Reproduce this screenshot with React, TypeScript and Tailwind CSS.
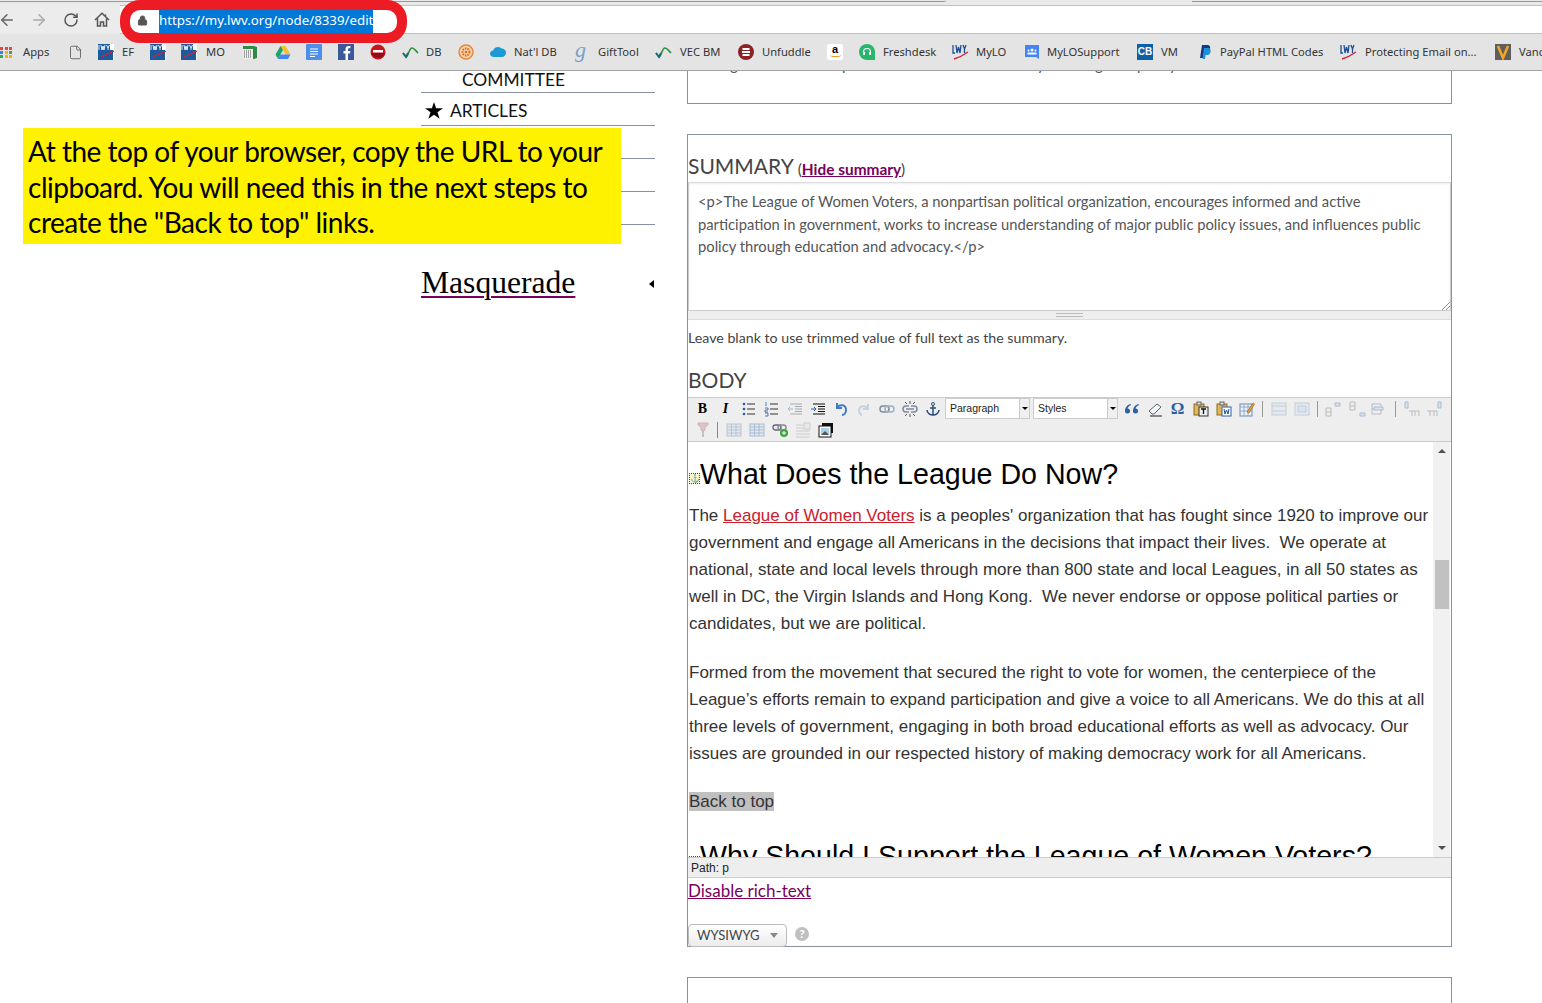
import React from "react";
import { ArrowLeft, ArrowRight, RotateCw, Lock, File } from "lucide-react";

const Lwv = () => (
  <svg width="16" height="16" viewBox="0 0 16 16">
    <rect width="16" height="16" fill="#fff" />
    <rect y="6" width="15" height="10" fill="#1c5a9c" />
    <rect x="0" y="0" width="12" height="7" fill="#1c5a9c" />
    <path d="M1 1v5M3 1l1 5 1-4 1 4 1-5M8.500 1l1.500 3 1.500-3M10 4v2" stroke="#fff" strokeWidth="0.900" fill="none" />
    <path d="M3 13 L16 7" stroke="#d8203c" strokeWidth="1.200" />
  </svg>
);
const LwvPlain = () => (
  <svg width="17" height="17" viewBox="0 0 17 17">
    <path d="M1 1v8h2M4 1l1 8 1.500-6 1.500 6 1-8M11 1l1.500 4 1.500-4M12.500 5v4" stroke="#1c4f94" strokeWidth="1.300" fill="none" />
    <path d="M2 15 Q9 13 16 8" stroke="#d8203c" strokeWidth="1.400" fill="none" />
  </svg>
);
const Apps = () => (
  <div className="grid grid-cols-3 gap-[1px] w-[13px]">
    {["#e8453c", "#e8453c", "#e8453c", "#3b7de0", "#f3b400", "#34a853", "#34a853", "#f3b400", "#f3b400"].map((c, i) => (
      <span key={i} className="w-[3px] h-[3px]" style={{ background: c }} />
    ))}
  </div>
);
const Wave = ({ c = "#1a6a7a" }: { c?: string }) => (
  <svg width="17" height="16" viewBox="0 0 17 16">
    <path d="M1 9 L4 13 C6 13 7 4 10 4 C12 4 14 7 16 9" stroke="#2d8f3e" strokeWidth="1.600" fill="none" />
    <path d="M1 9 L4 13 L6 9" stroke={c} strokeWidth="1.800" fill="none" />
  </svg>
);
const Box = ({ bg, children, r = 0 }: { bg: string; children?: React.ReactNode; r?: number }) => (
  <svg width="16" height="16" viewBox="0 0 16 16">
    <rect width="16" height="16" rx={r} fill={bg} />
    {children}
  </svg>
);

const bookmarks: { w: number; g?: number; icon?: React.ReactNode; label?: string }[] = [
  { w: 68, g: 23, icon: <Apps />, label: "Apps" },
  { w: 30, icon: <File size={15} strokeWidth={1.300} color="#555" /> },
  { w: 52, icon: <Lwv />, label: "EF" },
  { w: 31, icon: <Lwv /> },
  { w: 61, g: 25, icon: <Lwv />, label: "MO" },
  {
    w: 33,
    icon: (
      <svg width="16" height="16" viewBox="0 0 16 16">
        <path d="M1 2h11l3 1v11l-3 1H1z" fill="#2e8b46" />
        <rect x="1" y="5" width="10" height="10" fill="#eee" />
        <path d="M2 7h8M2 9h8M2 11h8M2 13h8" stroke="#555" strokeDasharray="1 1" />
      </svg>
    ),
  },
  {
    w: 31,
    icon: (
      <svg width="16" height="15" viewBox="0 0 16 15">
        <path d="M5.500 1h5l5 8.500h-5z" fill="#f6c02c" />
        <path d="M5.500 1 0.500 9.500 3 14 8 5z" fill="#1fa463" />
        <path d="M3 14h10l2.500-4.500h-10z" fill="#4285f4" />
      </svg>
    ),
  },
  {
    w: 32,
    icon: (
      <Box bg="#4d8ee8" r={1}>
        <path d="M4 5h8M4 7.500h8M4 10h8M4 12.500h5" stroke="#fff" />
      </Box>
    ),
  },
  {
    w: 32,
    icon: (
      <Box bg="#3b5998">
        <path d="M10 16V9.500h2l.300-2.500H10V5.500c0-.7.300-1.200 1.200-1.200h1.200V2c-.5 0-1-.1-1.700-.1C8.800 1.900 7.500 3 7.500 5.200V7H5.500v2.500h2V16z" fill="#fff" />
      </Box>
    ),
  },
  {
    w: 32,
    icon: (
      <svg width="16" height="16" viewBox="0 0 16 16">
        <circle cx="8" cy="8" r="7.500" fill="#c8141c" />
        <path d="M1 9a7.500 7.500 0 0 0 14 0z" fill="#8e0e14" />
        <rect x="3" y="6" width="10" height="2.500" fill="#fff" />
      </svg>
    ),
  },
  { w: 56, icon: <Wave />, label: "DB" },
  {
    w: 32,
    icon: (
      <svg width="16" height="16" viewBox="0 0 16 16">
        <circle cx="8" cy="8" r="7" fill="#f6d2a8" stroke="#e0863a" strokeWidth="1.400" />
        <circle cx="8" cy="8" r="3.500" fill="none" stroke="#d9682a" strokeWidth="2" strokeDasharray="1.500 1" />
        <circle cx="8" cy="8" r="1.200" fill="#d9682a" />
      </svg>
    ),
  },
  {
    w: 84,
    icon: (
      <svg width="16" height="12" viewBox="0 0 16 12">
        <path d="M4 11C1 11 0 9 0 7.500 0 5.500 2 4.500 3 4.500 4 2 6 1 8 1c1.500 0 3 1 3.500 1.500C13.500 2.500 16 4 16 6.500S14 11 12 11z" fill="#1b9ad6" />
      </svg>
    ),
    label: "Nat'l DB",
  },
  {
    w: 81,
    icon: <span className="text-[22px] leading-none italic text-[#7d9fc9] font-['Liberation_Serif',serif] -mt-1 ml-[1px]">g</span>,
    label: "GiftTool",
  },
  { w: 83, g: 25, icon: <Wave />, label: "VEC BM" },
  {
    w: 89,
    icon: (
      <svg width="16" height="16" viewBox="0 0 16 16">
        <circle cx="8" cy="8" r="8" fill="#8a2326" />
        <path d="M4.500 5h7M4 8h8M4.500 11h7" stroke="#fff" strokeWidth="1.800" />
      </svg>
    ),
    label: "Unfuddle",
  },
  {
    w: 32,
    icon: (
      <div className="w-4 h-4 bg-white rounded-[2px] flex flex-col items-center justify-start">
        <span className="text-[11px] leading-[10px] font-bold text-black font-['Liberation_Sans',sans-serif]">a</span>
        <span className="w-[11px] h-[3px] border-b-[1.5px] border-[#f29a1f] rounded-b-full" />
      </div>
    ),
  },
  {
    w: 93,
    icon: (
      <svg width="16" height="16" viewBox="0 0 16 16">
        <path d="M8 0a8 8 0 0 1 8 8v8H8A8 8 0 0 1 8 0z" fill="#27b76b" />
        <path d="M4.500 9V8a3.500 3.500 0 0 1 7 0v1" stroke="#fff" fill="none" strokeWidth="1.200" />
        <rect x="4" y="8" width="2" height="3" fill="#fff" />
        <rect x="10" y="8" width="2" height="3" fill="#fff" />
      </svg>
    ),
    label: "Freshdesk",
  },
  { w: 72, icon: <LwvPlain />, label: "MyLO" },
  {
    w: 113,
    g: 23,
    icon: (
      <svg width="16" height="16" viewBox="0 0 16 16">
        <path d="M1 1h14v14l-3-2H1z" fill="#4285f4" />
        <circle cx="8" cy="6" r="1.500" fill="#fff" />
        <circle cx="4.500" cy="6.500" r="1" fill="#fff" />
        <circle cx="11.500" cy="6.500" r="1" fill="#fff" />
        <rect x="3.500" y="8.500" width="9" height="2" fill="#fff" />
      </svg>
    ),
    label: "MyLOSupport",
  },
  {
    w: 60,
    icon: (
      <div className="w-4 h-4 bg-[#0f5fa8] text-white text-[10px] leading-4 text-center font-bold font-['Liberation_Sans',sans-serif]">CB</div>
    ),
    label: "VM",
  },
  {
    w: 143,
    g: 23,
    icon: (
      <svg width="16" height="16" viewBox="0 0 16 16">
        <path d="M5 1h5c3 0 3.500 2 3 4-.5 2.500-2.500 3.500-4.500 3.500H7L6 14H3z" fill="#123a86" />
        <path d="M7 4h4.500c2 .5 2.500 2 2 4-.5 2.500-2 3-4 3H8.500L8 15H5.500z" fill="#1c90d8" />
      </svg>
    ),
    label: "PayPal HTML Codes",
  },
  { w: 155, g: 25, icon: <LwvPlain />, label: "Protecting Email on..." },
  {
    w: 47,
    icon: (
      <Box bg="#5e5e5e">
        <path d="M3 2l5 12 5-12" stroke="#f4a81d" strokeWidth="2.500" fill="none" />
      </Box>
    ),
    label: "Vanc",
  },
];

const G = ({ children, w = 16 }: { children: React.ReactNode; w?: number }) => (
  <svg width={w} height="16" viewBox={`0 0 ${w} 16`}>
    {children}
  </svg>
);
const Btn = ({ children }: { children: React.ReactNode }) => (
  <div className="w-[23px] h-5 flex items-center justify-center shrink-0">{children}</div>
);
const Sep = () => <div className="w-[1px] h-[16px] bg-[#999] mx-[4px] shrink-0" />;
const Lines = ({ c = "#333", x = 7 }: { c?: string; x?: number }) => (
  <path d={`M${x} 3h8M${x} 8h8M${x} 13h8`} stroke={c} />
);
const Grid = ({ c = "#b8c4d4" }: { c?: string }) => (
  <G>
    <rect x="1" y="2" width="14" height="12" fill="#e3e8ee" stroke={c} />
    <path d="M1 5h14M1 8h14M1 11h14M5.500 2v12M10 2v12" stroke={c} />
  </G>
);

const Row1 = [
  <span className="font-['Liberation_Serif',serif] font-bold text-[14px] leading-none text-black">B</span>,
  <span className="font-['Liberation_Serif',serif] font-bold italic text-[14px] leading-none text-black">I</span>,
  <G><circle cx="3" cy="3" r="1.300" fill="#2a5ca8" /><circle cx="3" cy="8" r="1.300" fill="#2a5ca8" /><circle cx="3" cy="13" r="1.300" fill="#2a5ca8" /><Lines x={6} /></G>,
  <G><path d="M2 1v4M1 7h3v2H1v2h3M1 12h3v3H1" stroke="#2a5ca8" fill="none" strokeWidth=".8" /><Lines x={6} /></G>,
  <G><path d="M3 3h12M8 5.500h7M8 8h7M8 10.500h7M3 13h12" stroke="#aaa" /><path d="M1 8h5M3 6l-2 2 2 2" stroke="#9db8d6" fill="none" /></G>,
  <G><path d="M3 3h12M8 5.500h7M8 8h7M8 10.500h7M3 13h12" stroke="#111" /><path d="M1 8h5M4 6l2 2-2 2" stroke="#2a5ca8" fill="none" /></G>,
  <G><path d="M4 2v5h5M4 7c2-4 9-4 9 2 0 3-2 5-4 5" stroke="#3f7cc4" strokeWidth="2" fill="none" /></G>,
  <G><path d="M12 3v5H7M12 8c-2-4-9-4-9 2 0 2 2 4 3 4" stroke="#c5d3e3" strokeWidth="2" fill="none" /></G>,
  <G><rect x="1" y="5" width="9" height="6" rx="3" stroke="#7e8c9c" strokeWidth="1.500" fill="none" /><rect x="6" y="5" width="9" height="6" rx="3" stroke="#9eb0c4" strokeWidth="1.500" fill="none" /></G>,
  <G><path d="M7 5H4a3 3 0 0 0 0 6h3M9 5h3a3 3 0 0 1 0 6H9M4 8h8" stroke="#7e8c9c" strokeWidth="1.500" fill="none" /><path d="M3 1l2 2M8 0v3M13 1l-2 2M3 15l2-2M8 16v-3M13 15l-2-2" stroke="#555" /></G>,
  <G><circle cx="8" cy="3" r="1.500" stroke="#2d4d7a" fill="none" /><path d="M8 4.500V14M5 7h6M2 9c0 3 3 5 6 5s6-2 6-5" stroke="#2d4d7a" strokeWidth="1.500" fill="none" /></G>,
];
const Row1b = [
  <G><path d="M6.500 3C3 4 1 7 1 10a2.500 2.500 0 1 0 2.500-2.500C4 6 5 5 7 4zM14.500 3C11 4 9 7 9 10a2.500 2.500 0 1 0 2.500-2.500C12 6 13 5 15 4z" fill="#2d5fa5" /></G>,
  <G><path d="M5 13 L2 10 L10 3 L14 6 L7 13z" fill="#f3f6fa" stroke="#566" /><path d="M3 15h12" stroke="#222" /></G>,
  <span className="font-['Liberation_Serif',serif] font-bold text-[17px] leading-none text-[#2d5fa5]">Ω</span>,
  <G><rect x="1" y="3" width="10" height="11" fill="#e2b75a" stroke="#8a6a20" /><rect x="4" y="1" width="4" height="3" fill="#ddd" stroke="#666" /><rect x="6" y="6" width="9" height="9" fill="#eee" stroke="#333" /><path d="M8 8h5M10.500 8v5" stroke="#111" strokeWidth="1.300" /></G>,
  <G><rect x="1" y="3" width="10" height="11" fill="#e2b75a" stroke="#8a6a20" /><rect x="4" y="1" width="4" height="3" fill="#ddd" stroke="#666" /><rect x="6" y="6" width="9" height="9" fill="#fff" stroke="#2d5fa5" /><path d="M8 8l1 5 1.500-4 1.500 4 1-5" stroke="#1c4f94" fill="none" /></G>,
  <G><rect x="1" y="3" width="12" height="12" fill="#eef2f7" stroke="#6a88b0" /><path d="M1 6h12M5 3v12M9 3v12M1 10h12" stroke="#8fa8c8" /><path d="M8 11 14 2l1.500 1L10 12z" fill="#e2a23a" stroke="#8a5a20" strokeWidth=".6" /></G>,
];
const faded = (a: string, b: string) => (
  <G><rect x="1" y="2" width="14" height="12" fill="#e4e9ef" stroke="#c4cdd8" /><path d={a} stroke="#c4cdd8" fill={b} /></G>
);
const Tbl = ({ a, b }: { a: string; b: string }) => (
  <G w={18}><path d={a} stroke="#bbb" fill="none" /><path d={b} stroke="#a8bcd4" fill="#d8e3ef" /></G>
);

const Editor = () => (
  <div className="relative h-[415px] overflow-hidden bg-white flex">
    <div className="w-[745px] shrink-0 pt-[15px] pl-[1px] font-['Liberation_Sans',Arial,sans-serif] text-[#333] text-[17px] leading-[27px] whitespace-nowrap">
      <h2 className="text-[28.600px] leading-[34px] text-black flex items-center">
        <span className="w-[11px] h-[11px] mt-[8px] bg-[#fbf7c0] border border-dotted border-[#444] text-[8px] leading-[9px] text-center">⚓</span>
        What Does the League Do Now?
      </h2>
      <p className="mt-[10.500px]">
        The <a className="text-[#c9202c] underline">League of Women Voters</a> is a peoples' organization that has fought since 1920 to improve our
        <br />
        government and engage all Americans in the decisions that impact their lives.&nbsp; We operate at
        <br />
        national, state and local levels through more than 800 state and local Leagues, in all 50 states as
        <br />
        well in DC, the Virgin Islands and Hong Kong.&nbsp; We never endorse or oppose political parties or
        <br />
        candidates, but we are political.
      </p>
      <p className="mt-[22px]">
        Formed from the movement that secured the right to vote for women, the centerpiece of the
        <br />
        League’s efforts remain to expand participation and give a voice to all Americans. We do this at all
        <br />
        three levels of government, engaging in both broad educational efforts as well as advocacy. Our
        <br />
        issues are grounded in our respected history of making democracy work for all Americans.
      </p>
      <p className="mt-[21px]">
        <span className="bg-[#c0c0c0]">Back to top</span>
      </p>
      <h2 className="mt-[24px] text-[28.600px] leading-[34px] text-black flex items-center">
        <span className="w-[11px] h-[11px] mt-[17px] border-t border-dotted border-[#444] self-start" />
        Why Should I Support the League of Women Voters?
      </h2>
    </div>
    <div className="w-[17px] shrink-0 bg-[#f1f1f1] flex flex-col items-center justify-between py-[7px] relative">
      <span className="w-0 h-0 border-x-[4px] border-x-transparent border-b-[4px] border-b-[#505050]" />
      <span className="w-[14px] h-[49px] bg-[#c1c1c1] absolute top-[118px] left-[1.500px]" />
      <span className="w-0 h-0 border-x-[4px] border-x-transparent border-t-[4px] border-t-[#505050]" />
    </div>
  </div>
);

const SelectBox = ({ label, w }: { label: string; w: number }) => (
  <div className="flex h-[21px] shrink-0">
    <div className="bg-white border border-[#ccc] text-[10.500px] leading-[19px] pl-[4px] font-['Liberation_Sans',sans-serif] text-[#222]" style={{ width: w }}>
      {label}
    </div>
    <div className="w-[10px] border-y border-r border-[#ccc] bg-[#f0f0f0] flex items-center justify-center">
      <span className="w-0 h-0 border-x-[3px] border-x-transparent border-t-[3px] border-t-black" />
    </div>
  </div>
);

export default function App() {
  return (
    <div className="relative w-[1542px] h-[1003px] overflow-hidden bg-white font-['Lato',sans-serif] text-[#111]">
      <header className="h-[71px] flex flex-col font-['Noto_Sans',sans-serif]">
        <div className="h-[5px] bg-[#e9e9e9] flex">
          <div className="w-[946px] h-[2px] border-b border-[#999] rounded-br" />
          <div className="w-[246px]" />
          <div className="flex-1 h-[2px] border-b border-[#999]" />
        </div>
        <div className="h-[29px] flex">
          <div className="w-[120px] bg-[#ececec] flex items-center text-[#555]">
            <ArrowLeft size={18} strokeWidth={2} className="-ml-[2px] text-[#666]" />
            <ArrowRight size={18} strokeWidth={2} className="ml-[14px] text-[#aaa]" />
            <RotateCw size={16} strokeWidth={2.200} className="ml-[15px] text-[#555]" />
            <svg width="16" height="15" viewBox="0 0 16 15" className="ml-[15px]">
              <path d="M1 8 8 1.200 15 8M3.500 6.500V14h3V10h3v4h3V6.500M11.500 2.500v2" stroke="#555" strokeWidth="1.500" fill="none" />
            </svg>
          </div>
          <div className="flex-1 bg-white border-y border-[#aac4f2]" />
        </div>
        <div className="h-[37px] bg-[#e4e4e4] border-b border-[#a3a3a3] flex items-center overflow-hidden">
          {bookmarks.map((b, i) => (
            <div key={i} className="flex items-center shrink-0 h-4" style={{ width: b.w }}>
              <div className="shrink-0 flex items-center" style={{ width: b.g ?? 24 }}>{b.icon}</div>
              {b.label && <span className="text-[11.200px] leading-4 text-[#333] whitespace-nowrap">{b.label}</span>}
            </div>
          ))}
        </div>
      </header>

      <main className="flex pl-[421px]">
        <nav className="w-[234px] shrink-0 text-[17.400px] text-[#111]">
          <div className="h-[22px] border-b border-[#8890a5] pl-[41px] leading-[17px]">COMMITTEE</div>
          <div className="h-[33px] border-b border-[#8890a5] flex items-center pl-[4px] pt-[5px] gap-[7px]">
            <svg width="18" height="17" viewBox="0 0 18 17" className="-mt-[2px]">
              <path d="M9 0l2.100 6.300H18l-5.500 4 2.100 6.500L9 12.800l-5.600 4 2.100-6.500-5.500-4h6.900z" fill="#000" />
            </svg>
            ARTICLES
          </div>
          <div className="h-[33px] border-b border-[#8890a5]" />
          <div className="h-[33px] border-b border-[#8890a5]" />
          <div className="h-[33px] border-b border-[#8890a5]" />
          <div className="mt-[40px] flex items-center justify-between pr-[1px]">
            <a className="font-['Liberation_Serif',serif] text-[31.600px] leading-[36px] text-black underline decoration-[#7a0060] decoration-2 underline-offset-[3px]">Masquerade</a>
            <span className="w-0 h-0 mt-[1px] border-y-[4px] border-y-transparent border-r-[5px] border-r-black" />
          </div>
        </nav>

        <section className="ml-[32px] w-[765px] shrink-0">
          <div className="h-[33px] border-x border-b border-[#8890a5] overflow-hidden">
            <div className="flex text-[15px] leading-[18px] text-[#555] -mt-[16px] pl-[42px]">
              <span className="w-[112px]">g</span><span className="w-[195px]">p</span><span className="w-[58px]">y</span><span className="w-[42px]">g</span><span className="w-[32px]">p</span><span>y</span>
            </div>
          </div>

          <div className="mt-[30px] h-[813px] border border-[#8890a5]">
            <div className="h-[47px] flex items-end pb-[1px] text-[#444]">
              <span className="text-[21px] leading-[30px]">SUMMARY</span>
              <span className="text-[15.400px] leading-[24px] ml-[4px]">
                (<a className="text-[#7a0060] font-bold underline">Hide summary</a>)
              </span>
            </div>
            <div className="relative h-[129px] border border-[#ccc] border-t-[#ddd] shadow-[inset_0_1px_2px_rgba(0,0,0,0.08)] pl-[9px] pt-[7px] pr-2 text-[14.750px] leading-[22.500px] text-[#555] whitespace-nowrap">
              &lt;p&gt;The League of Women Voters, a nonpartisan political organization, encourages informed and active
              <br />
              participation in government, works to increase understanding of major public policy issues, and influences public
              <br />
              policy through education and advocacy.&lt;/p&gt;
              <svg className="absolute right-0 bottom-0" width="9" height="9" viewBox="0 0 9 9">
                <path d="M1 9l8-8M5 9l4-4" stroke="#666" strokeDasharray="1 .5" />
              </svg>
            </div>
            <div className="h-[9px] bg-[#eee] border-b border-[#ddd] flex items-center justify-center">
              <div className="w-[27px] h-[4px] border-y border-[#bbb]" />
            </div>
            <div className="h-[36px] flex items-center text-[14.200px] text-[#444]">Leave blank to use trimmed value of full text as the summary.</div>
            <div className="h-[41px] flex items-end pb-[3px] text-[21px] leading-[28px] text-[#444]">BODY</div>

            <div className="h-[45px] bg-[#eee] border-y border-[#ccc] pl-[3px]">
              <div className="flex items-center h-[21px]">
                {Row1.map((x, i) => <Btn key={i}>{x}</Btn>)}
                <div className="w-[1px]" />
                <SelectBox label="Paragraph" w={75} />
                <div className="w-[3px]" />
                <SelectBox label="Styles" w={75} />
                <div className="w-[2px]" />
                {Row1b.map((x, i) => <Btn key={i}>{x}</Btn>)}
                <Sep />
                <Btn>{faded("M1 5h14M1 10h14", "none")}</Btn>
                <Btn>{faded("M4 5h8v6H4z", "#d8e3ef")}</Btn>
                <Sep />
                <Btn><Tbl a="M1 7h5v8H1zM1 11h5" b="M10 2h5v3h-5z" /></Btn>
                <Btn><Tbl a="M2 1h5v8H2zM2 5h5" b="M12 12h5v3h-5z" /></Btn>
                <Btn><Tbl a="M1 3h9v10H1zM1 8h9" b="M3 6h9v3H3z" /></Btn>
                <Sep />
                <Btn><Tbl a="M6 10h10v5M9 10v5M12 10v5" b="M2 1h3v6H2z" /></Btn>
                <Btn><Tbl a="M1 10h10v5M4 10v5M8 10v5" b="M12 1h3v6h-3z" /></Btn>
              </div>
              <div className="flex items-center h-[22px]">
                <Btn><G><path d="M3 1h10v2l-3 2v3l-2 1-2-1V5L3 3z" fill="#e9c0c0" stroke="#bbb" /><path d="M8 9v6" stroke="#999" /></G></Btn>
                <div className="w-[1px] h-[16px] bg-[#888] mx-[3px]" />
                <div className="w-[1px]" />
                <Btn><Grid /></Btn>
                <Btn><Grid c="#a8bcd4" /></Btn>
                <Btn><G><rect x="1" y="3" width="8" height="5" rx="2.500" stroke="#667" strokeWidth="1.400" fill="none" /><rect x="6" y="3" width="8" height="5" rx="2.500" stroke="#889" strokeWidth="1.400" fill="none" /><circle cx="12" cy="11" r="4" fill="#45a545" /><path d="M10 11h4M12 9v4" stroke="#fff" /></G></Btn>
                <Btn><G><path d="M1 3h7M1 6h7M1 9h14M1 12h14M1 15h14" stroke="#ccc" /><rect x="9" y="1" width="6" height="6" fill="#e8e8e8" stroke="#ccc" /></G></Btn>
                <Btn><G><rect x="4" y="1" width="11" height="10" fill="#111" /><rect x="1" y="4" width="12" height="11" fill="#fff" stroke="#111" /><rect x="3" y="6" width="8" height="7" fill="#a8cfe8" /><path d="M3 13l4-4 4 4z" fill="#555" /></G></Btn>
              </div>
            </div>

            <Editor />

            <div className="h-[21px] bg-[#eee] border-y border-[#ccc] pl-[3px] text-[12px] leading-[20px] text-[#222] font-['Liberation_Sans',sans-serif]">Path: p</div>
            <div className="h-[27px] pb-[1px] flex items-center">
              <a className="text-[17px] leading-[22px] text-[#7a0060] underline">Disable rich-text</a>
            </div>
            <div className="mt-[19px] flex items-center">
              <div className="w-[99px] h-[23px] rounded-[4px] border border-[#bbb] bg-gradient-to-b from-white to-[#ececec] flex items-center pl-[8px] text-[13px] text-[#444] gap-[10px]">
                WYSIWYG
                <span className="w-0 h-0 border-x-[4px] border-x-transparent border-t-[5px] border-t-[#888]" />
              </div>
              <div className="ml-[8px] -mt-[3px] w-[14px] h-[14px] rounded-full bg-[#c0c0c0] text-white text-[12px] leading-[14px] text-center font-bold">?</div>
            </div>
          </div>

          <div className="mt-[30px] h-[100px] border border-[#8890a5]" />
        </section>
      </main>

      <div className="absolute left-[120px] top-0 w-[287px] h-[43px] rounded-[20px] border-[10px] border-[#ed1c24] bg-white flex items-start font-['Noto_Sans',sans-serif]">
        <Lock size={11} fill="#555" color="#555" className="ml-[7px] mt-[5px]" />
        <span className="ml-[11px] bg-[#0078d7] text-white text-[13.300px] leading-[21px] h-[23px] whitespace-nowrap">https://my.lwv.org/node/8339/edit</span>
      </div>

      <div className="absolute left-[23px] top-[128px] w-[598px] h-[116px] bg-[#fff200] pl-[5px] pt-[6px] text-[28px] tracking-[-0.480px] leading-[35.500px] text-black whitespace-nowrap">
        At the top of your browser, copy the URL to your
        <br />
        clipboard. You will need this in the next steps to
        <br />
        create the "Back to top" links.
      </div>
    </div>
  );
}
